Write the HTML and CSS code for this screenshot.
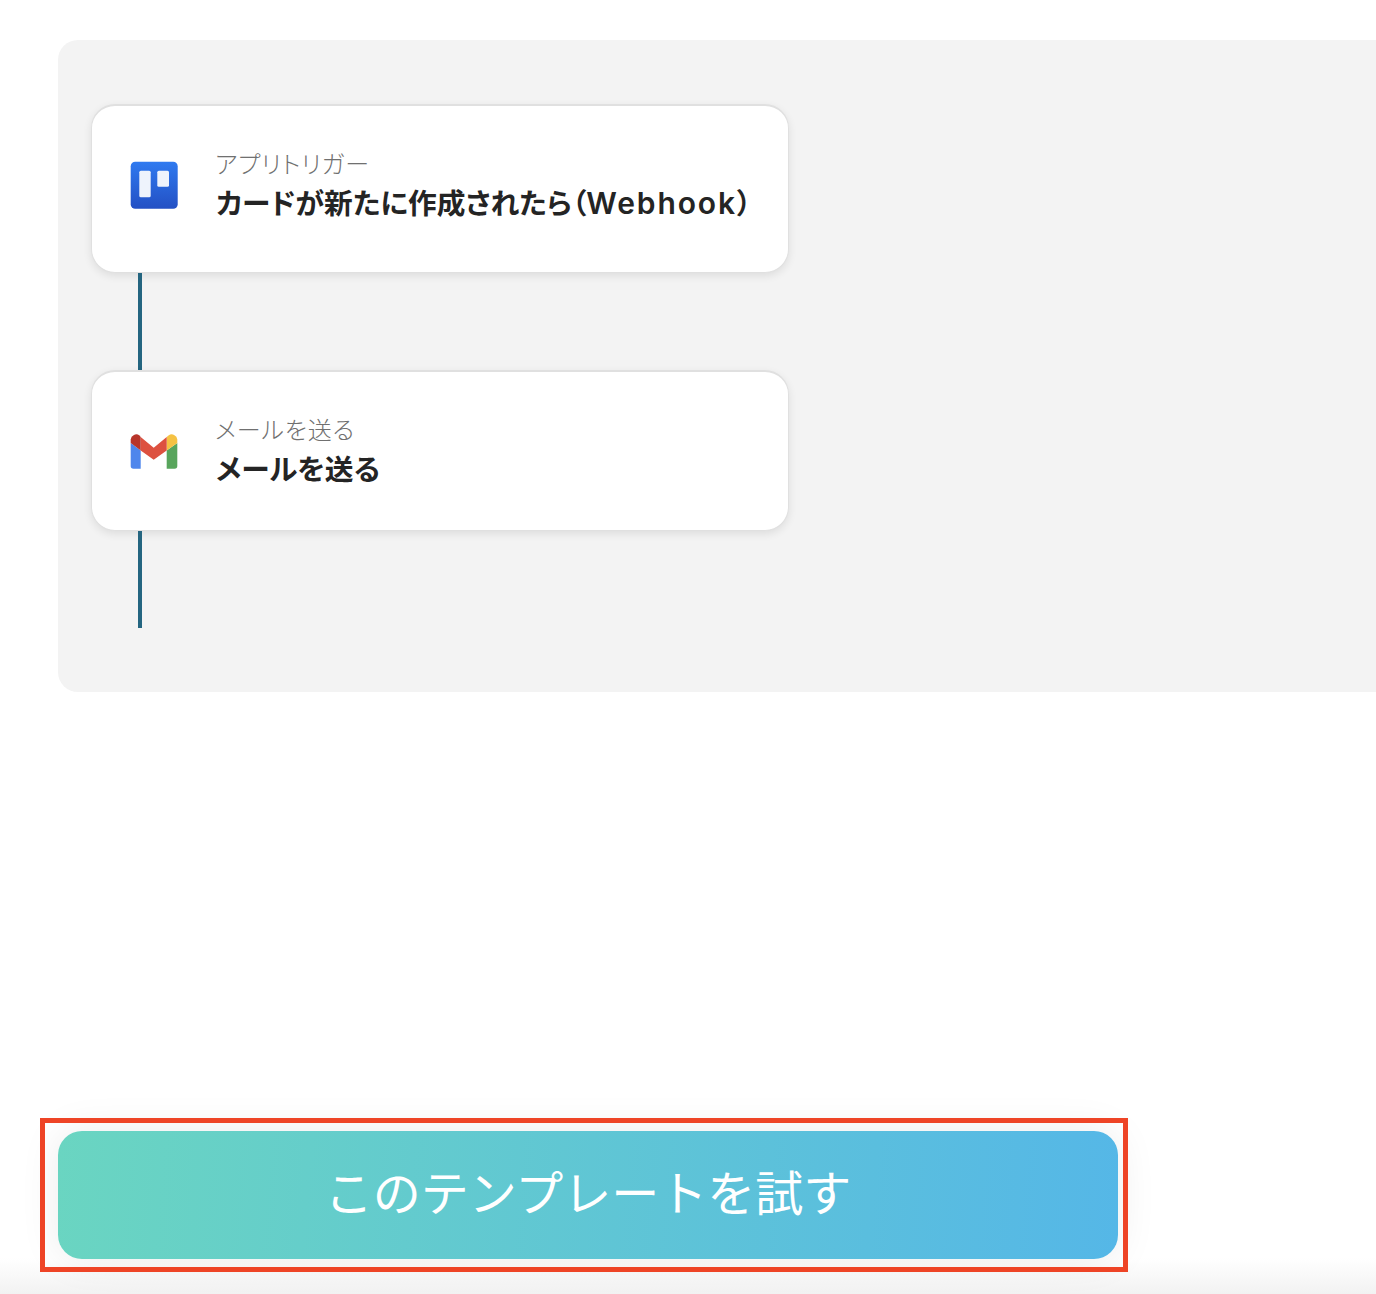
FILE: index.html
```html
<!DOCTYPE html>
<html lang="ja">
<head>
<meta charset="utf-8">
<title>このテンプレートを試す</title>
<link rel="stylesheet" href="styles.css">
</head>
<body>
<main class="page">
  <section class="flow-panel">
    <div class="flow-card flow-card-first">
      <svg class="app-icon" viewBox="0 0 48 48" aria-hidden="true">
        <defs>
          <linearGradient id="trello" x1="0" y1="0" x2="0" y2="1">
            <stop offset="0" stop-color="#2f7af0"/>
            <stop offset="1" stop-color="#2350c4"/>
          </linearGradient>
        </defs>
        <rect x="0.7" y="0.7" width="47" height="47" rx="4.5" fill="url(#trello)"/>
        <rect x="9.3" y="9.7" width="11.4" height="26.6" rx="1.5" fill="#eef3fc"/>
        <rect x="27.3" y="9.7" width="11.700" height="16" rx="1.5" fill="#eef3fc"/>
      </svg>
      <div class="card-text">
        <p class="card-label">アプリトリガー</p>
        <p class="card-title">カードが新たに作成されたら（<span class="title-latin">Webhook</span>）</p>
      </div>
    </div>
    <div class="connector"></div>
    <div class="flow-card flow-card-second">
      <svg class="app-icon" viewBox="0 0 48 48" aria-hidden="true">
        <path d="M0.700 16L10.700 23.500V41.800H3.500A2.800 2.800 0 0 1 0.700 39z" fill="#4e86ec"/>
        <path d="M47.300 16L36.700 23.500V41.800H44.500A2.800 2.800 0 0 0 47.300 39z" fill="#58a55c"/>
        <path d="M36.700 10L38.500 8.500A5.500 5.500 0 0 1 47.300 12.500V16L36.700 23.500z" fill="#f5c243"/>
        <path d="M10.700 10L23.700 20.800L36.700 10V23.500L23.700 32.800L10.700 23.500z" fill="#dd5140"/>
        <path d="M0.700 12.500A5.500 5.500 0 0 1 9.500 8.500L10.700 10V23.500L0.700 16z" fill="#b8352a"/>
      </svg>
      <div class="card-text">
        <p class="card-label">メールを送る</p>
        <p class="card-title">メールを送る</p>
      </div>
    </div>
    <div class="connector"></div>
  </section>
  <div class="try-frame">
    <button class="try-button" type="button">このテンプレートを試す</button>
  </div>
</main>
</body>
</html>
```
FILE: styles.css
```css
html, body {
  margin: 0;
  height: 100%;
}

body {
  overflow: hidden;
  background: linear-gradient(to bottom, #ffffff 0, #ffffff 1258px, #f2f2f2 1294px);
  font-family: "Noto Sans CJK JP", "Noto Sans", sans-serif;
}

.page {
  padding: 40px 0 0 40px;
}

.flow-panel {
  margin-left: 18px;
  margin-right: -30px;
  height: 652px;
  box-sizing: border-box;
  padding: 64px 0 0 33px;
  background: #f3f3f3;
  border-radius: 20px;
}

.flow-card {
  box-sizing: border-box;
  width: 698px;
  display: flex;
  align-items: center;
  gap: 37px;
  padding-left: 38px;
  background: #fff;
  border-style: solid;
  border-color: #e0e0e0;
  border-width: 2px 1px 1px;
  border-radius: 24px;
  box-shadow: 0 3px 8px rgba(0, 0, 0, 0.09);
}

.flow-card-first {
  height: 169px;
  padding-bottom: 9px;
}

.flow-card-second {
  height: 161px;
  padding-bottom: 1px;
}

.app-icon {
  flex: none;
  width: 48px;
  height: 48px;
}

.card-text {
  min-width: 0;
}

.card-label {
  margin: 0 0 2px;
  font-size: 24px;
  line-height: 34px;
  font-weight: 300;
  letter-spacing: 0.9px;
  color: #707070;
  font-feature-settings: "palt";
}

.card-title {
  margin: 0 0 1px 1px;
  font-size: 28.7px;
  line-height: 40px;
  font-weight: 700;
  color: #242424;
  white-space: nowrap;
  font-feature-settings: "palt";
}

.title-latin {
  font-family: "Inter", "Noto Sans", sans-serif;
  font-size: 30px;
  font-weight: 600;
  letter-spacing: 1.9px;
}

.connector {
  width: 4px;
  height: 97px;
  margin-left: 47px;
  background: #246580;
}

.try-frame {
  position: relative;
  width: 1060px;
  margin-top: 439px;
  margin-left: 18px;
}

.try-frame::after {
  content: "";
  position: absolute;
  inset: -13px -10px -13px -18px;
  border: 5px solid #ee4426;
  pointer-events: none;
}

.try-button {
  display: block;
  width: 100%;
  height: 128px;
  padding: 0 0 10px;
  border: 0;
  border-radius: 24px;
  background: linear-gradient(95deg, #6ad5c1 0%, #55b7e7 100%);
  box-shadow: 0 0 40px rgba(0, 0, 0, 0.08);
  color: #fff;
  font-family: inherit;
  font-size: 48px;
  font-weight: 400;
}
```
